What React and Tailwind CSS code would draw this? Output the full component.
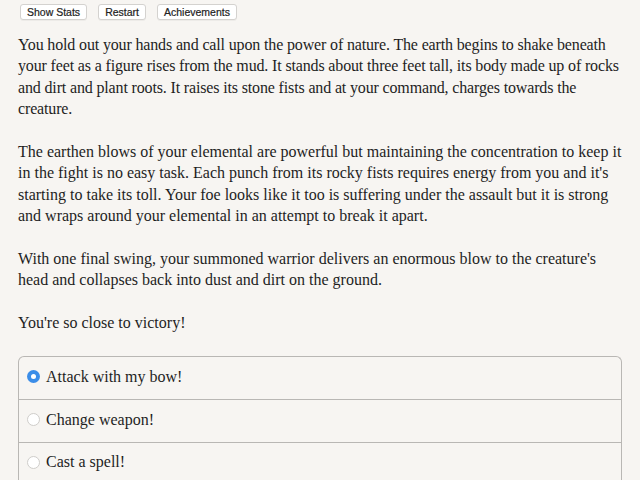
const paragraphs = [
  "You hold out your hands and call upon the power of nature. The earth begins to shake beneath your feet as a figure rises from the mud. It stands about three feet tall, its body made up of rocks and dirt and plant roots. It raises its stone fists and at your command, charges towards the creature.",
  "The earthen blows of your elemental are powerful but maintaining the concentration to keep it in the fight is no easy task. Each punch from its rocky fists requires energy from you and it's starting to take its toll. Your foe looks like it too is suffering under the assault but it is strong and wraps around your elemental in an attempt to break it apart.",
  "With one final swing, your summoned warrior delivers an enormous blow to the creature's head and collapses back into dust and dirt on the ground.",
  "You're so close to victory!",
];

const choices = ["Attack with my bow!", "Change weapon!", "Cast a spell!"];

function Radio({ checked }) {
  if (checked) {
    return (
      <span className="flex h-[13px] w-[13px] shrink-0 items-center justify-center rounded-full bg-[#3b8de8]">
        <span className="h-[5px] w-[5px] rounded-full bg-white" />
      </span>
    );
  }
  return <span className="h-[13px] w-[13px] shrink-0 rounded-full border border-[#cfcdca] bg-white" />;
}

function TopButton({ children }) {
  return (
    <button className="rounded-[3px] border border-[#d4d2cf] bg-white px-[6px] leading-[14px] text-[#222] shadow-[0_1px_0_rgba(0,0,0,0.04)]">
      {children}
    </button>
  );
}

export default function App() {
  return (
    <div className="min-h-[480px] bg-[#f7f5f2] px-[18px] text-[#1e1e1e] font-['Palatino_Linotype','Book_Antiqua','Liberation_Serif',serif]">
      <div className="flex gap-[11px] pl-[2px] pt-[4px] font-['Liberation_Sans',sans-serif] text-[10.5px] [-webkit-text-stroke:0.2px_#222]">
        <TopButton>Show Stats</TopButton>
        <TopButton>Restart</TopButton>
        <TopButton>Achievements</TopButton>
      </div>

      <div className="mt-[14px] w-[606px] text-[16px] leading-[21.4px]">
        {paragraphs.map((p, i) => (
          <p key={i} className={`mb-[21.4px] ${i === 0 ? "tracking-[-0.15px]" : ""}`}>{p}</p>
        ))}
      </div>

      <div className="mt-[22px] w-[604px] rounded-t-[6px] border border-b-0 border-[#b9b7b4]">
        {choices.map((c, i) => (
          <label
            key={i}
            className={`flex h-[42.5px] items-center gap-[6px] pb-[2px] pl-[8px] text-[16px] ${i > 0 ? "border-t border-[#b9b7b4]" : ""}`}
          >
            <Radio checked={i === 0} />
            <span>{c}</span>
          </label>
        ))}
      </div>
    </div>
  );
}
